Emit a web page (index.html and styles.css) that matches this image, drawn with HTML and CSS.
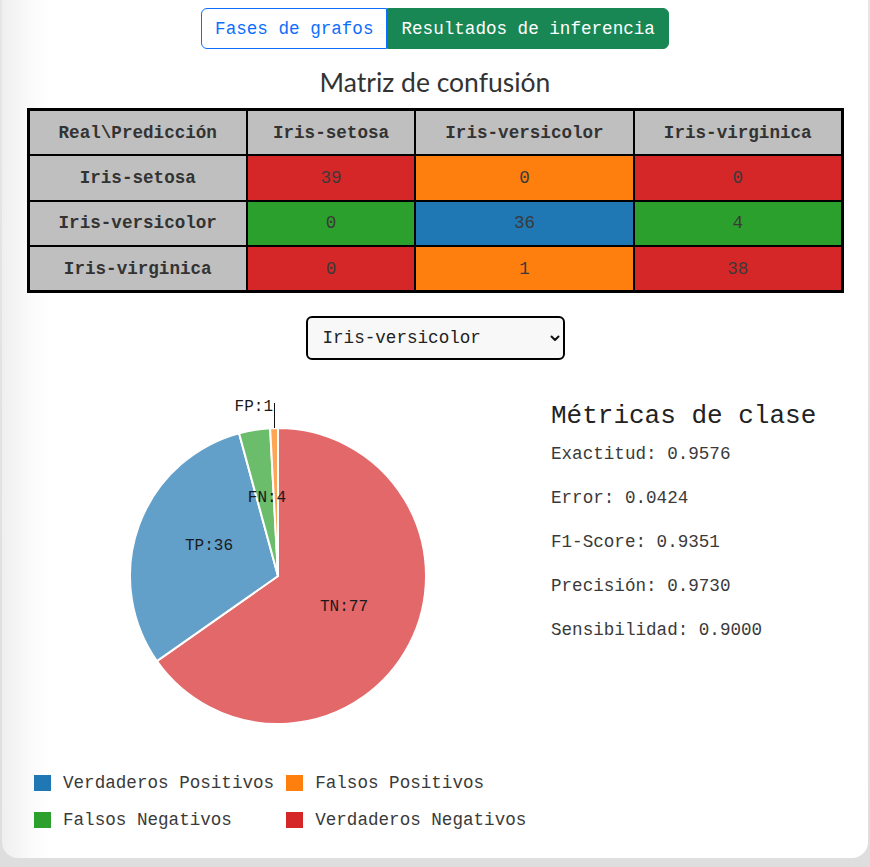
FILE: index.html
```html
<!DOCTYPE html>
<html lang="es">
<head>
<meta charset="utf-8">
<title>Resultados de inferencia</title>
<link rel="stylesheet" href="styles.css">
</head>
<body>
<div class="card">
  <div class="tabs">
    <button class="tab tab-outline">Fases de grafos</button><button class="tab tab-active">Resultados de inferencia</button>
  </div>
  <h2 class="title">Matriz de confusión</h2>
  <table class="matrix">
    <colgroup>
      <col class="c1"><col class="c2"><col class="c3"><col class="c4">
    </colgroup>
    <thead>
      <tr><th>Real\Predicción</th><th>Iris-setosa</th><th>Iris-versicolor</th><th>Iris-virginica</th></tr>
    </thead>
    <tbody>
      <tr><th>Iris-setosa</th><td class="tn">39</td><td class="fp">0</td><td class="tn">0</td></tr>
      <tr><th>Iris-versicolor</th><td class="fn">0</td><td class="tp">36</td><td class="fn">4</td></tr>
      <tr><th>Iris-virginica</th><td class="tn">0</td><td class="fp">1</td><td class="tn">38</td></tr>
    </tbody>
  </table>
  <div class="select-wrap">
    <select class="class-select">
      <option>Iris-setosa</option>
      <option selected>Iris-versicolor</option>
      <option>Iris-virginica</option>
    </select>
    <svg class="chev" width="10" height="7" viewBox="0 0 10 7"><path d="M1.5 1.5 L5 5 L8.5 1.5" fill="none" stroke="#111" stroke-width="2" stroke-linecap="round" stroke-linejoin="round"/></svg>
  </div>
  <div class="chart-row">
    <svg class="pie" width="330" height="355" viewBox="118 385 330 355">
      <g stroke="#fff" stroke-width="2">
        <path fill="#e2686a" d="M278 577 L278 429 A148 148 0 1 1 156.88 662.06 Z"/>
        <path fill="#62a0ca" d="M278 577 L156.88 662.06 A148 148 0 0 1 239.06 434.21 Z"/>
        <path fill="#6bbc6b" d="M278 577 L239.06 434.21 A148 148 0 0 1 270.12 429.21 Z"/>
        <path fill="#ffa556" d="M278 577 L270.12 429.21 A148 148 0 0 1 278 429 Z"/>
      </g>
      <line x1="274.5" y1="404" x2="274.5" y2="429" stroke="#111" stroke-width="1"/>
      <g class="pie-label">
        <text x="344" y="612" text-anchor="middle">TN:77</text>
        <text x="209" y="551" text-anchor="middle">TP:36</text>
        <text x="267" y="503" text-anchor="middle">FN:4</text>
        <text x="273" y="412" text-anchor="end">FP:1</text>
      </g>
    </svg>
    <div class="metrics">
      <h3 class="metrics-title">Métricas de clase</h3>
      <p class="metric">Exactitud: 0.9576</p>
      <p class="metric">Error: 0.0424</p>
      <p class="metric">F1-Score: 0.9351</p>
      <p class="metric">Precisión: 0.9730</p>
      <p class="metric">Sensibilidad: 0.9000</p>
    </div>
  </div>
  <div class="legend">
    <div class="legend-item"><span class="swatch sw-tp"></span>Verdaderos Positivos</div>
    <div class="legend-item"><span class="swatch sw-fp"></span>Falsos Positivos</div>
    <div class="legend-item"><span class="swatch sw-fn"></span>Falsos Negativos</div>
    <div class="legend-item"><span class="swatch sw-tn"></span>Verdaderos Negativos</div>
  </div>
</div>
</body>
</html>
```
FILE: styles.css
```css
* { box-sizing: border-box; }

:root {
  --mono: "Courier New", "Nimbus Mono PS", "Nimbus Mono L", FreeMono, Courier, "Liberation Mono", monospace;
}

body {
  margin: 0;
  height: 867px;
  overflow: hidden;
  background: linear-gradient(180deg, #e6e6e6 0, #dedede 100%);
  font-family: var(--mono);
  color: #333;
}

.card {
  margin: 0 2px;
  height: 858px;
  padding-top: 8px;
  background: linear-gradient(90deg, #efefef 0, #fbfbfb 30px, #fff 48px);
  border-radius: 0 0 16px 16px;
}

.tabs {
  display: flex;
  justify-content: center;
}

.tab {
  margin: 0;
  height: 41px;
  padding: 0 13px;
  font: 17.6px var(--mono);
  border: 1px solid #0d6efd;
  background: #fff;
  color: #0d6efd;
}

.tab-outline {
  border-radius: 6px 0 0 6px;
}

.tab-active {
  background: #198754;
  border-color: #198754;
  color: #fff;
  border-radius: 0 6px 6px 0;
}

.title {
  margin: 16px 0 9px;
  text-align: center;
  font: 400 26.5px/34px Lato, "Open Sans", sans-serif;
  color: #333;
}

.matrix {
  margin: 0 auto;
  width: 814px;
  table-layout: fixed;
  border-collapse: collapse;
  border: 3px solid #000;
  font-size: 17.6px;
}

.c1 { width: 219px; }
.c2 { width: 168px; }
.c3 { width: 219px; }
.c4 { width: 208px; }

.matrix th,
.matrix td {
  border: 2px solid #000;
  height: 45.5px;
  padding: 0;
  text-align: center;
  color: #333;
}

.matrix th {
  background: #bfbfbf;
  font-weight: bold;
}

.matrix td {
  font-weight: normal;
  color: #3a3a3a;
}

.tn { background: #d62728; }
.fp { background: #ff7f0e; }
.fn { background: #2ca02c; }
.tp { background: #1f77b4; }

.select-wrap {
  position: relative;
  width: 259px;
  margin: 23px auto 0;
}

.class-select {
  display: block;
  width: 259px;
  height: 44px;
  margin: 0;
  padding: 0 0 0 15px;
  appearance: none;
  -webkit-appearance: none;
  border: 2px solid #000;
  border-radius: 6px;
  background: #f8f8f8;
  color: #222;
  font: 17.6px var(--mono);
}

.chev {
  position: absolute;
  right: 5px;
  top: 19px;
}

.chart-row {
  display: flex;
  margin-top: 24px;
}

.pie {
  display: block;
  margin-left: 116px;
  flex: none;
}

.pie-label text {
  font: 16px var(--mono);
  fill: #1a1a1a;
}

.metrics {
  margin-left: 103px;
  padding-top: 17px;
}

.metrics-title {
  margin: 0 0 1px;
  font: 400 26px var(--mono);
  color: #222;
}

.metric {
  margin: 0;
  font-size: 17.6px;
  line-height: 44px;
  color: #3a3a3a;
}

.legend {
  display: grid;
  grid-template-columns: auto auto;
  justify-content: start;
  column-gap: 12px;
  margin-top: 25px;
  padding-left: 32px;
}

.legend-item {
  display: flex;
  align-items: center;
  gap: 12px;
  height: 37px;
  font-size: 17.6px;
  color: #3a3a3a;
}

.swatch {
  width: 17px;
  height: 16px;
  flex: none;
}

.sw-tp { background: #1f77b4; }
.sw-fp { background: #ff7f0e; }
.sw-fn { background: #2ca02c; }
.sw-tn { background: #d62728; }
```
